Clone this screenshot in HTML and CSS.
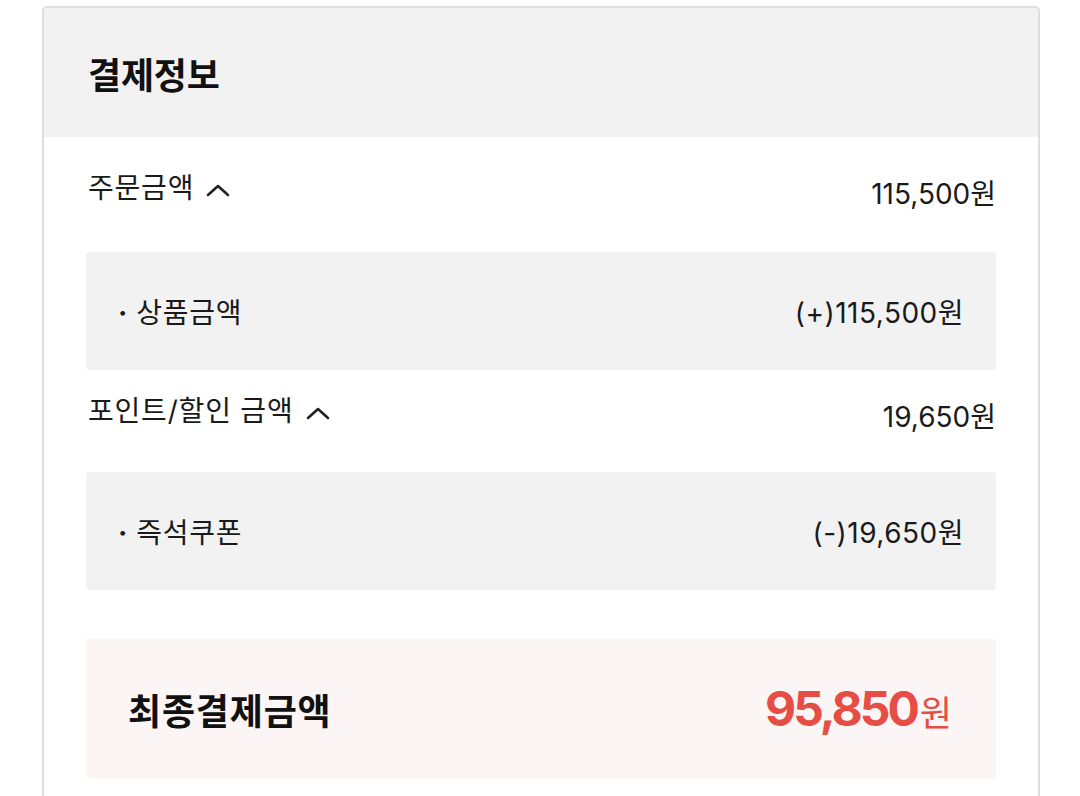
FILE: index.html
```html
<!DOCTYPE html>
<html lang="ko">
<head>
<meta charset="utf-8">
<title>결제정보</title>
<link rel="stylesheet" href="styles.css">
</head>
<body>
<div class="card">
  <div class="card-head">
    <h2 class="title">결제정보</h2>
  </div>
  <div class="card-body">
    <div class="group">
      <div class="row">
        <div class="label">주문금액
          <svg class="chev" width="24" height="14" viewBox="0 0 24 14"><path d="M2 12 L12 3 L22 12" fill="none" stroke="#222" stroke-width="2.6" stroke-linecap="round" stroke-linejoin="round"/></svg>
        </div>
        <div class="value">115,500원</div>
      </div>
      <div class="detail">
        <div class="detail-label"><span class="dot">·</span>상품금액</div>
        <div class="detail-value">(+)115,500원</div>
      </div>
    </div>
    <div class="group second">
      <div class="row">
        <div class="label">포인트/할인 금액
          <svg class="chev" width="24" height="14" viewBox="0 0 24 14"><path d="M2 12 L12 3 L22 12" fill="none" stroke="#222" stroke-width="2.6" stroke-linecap="round" stroke-linejoin="round"/></svg>
        </div>
        <div class="value">19,650원</div>
      </div>
      <div class="detail">
        <div class="detail-label"><span class="dot">·</span>즉석쿠폰</div>
        <div class="detail-value">(-)19,650원</div>
      </div>
    </div>
    <div class="total">
      <div class="total-label">최종결제금액</div>
      <div class="total-value"><span class="num">95,850</span><span class="won">원</span></div>
    </div>
  </div>
</div>
</body>
</html>
```

FILE: styles.css
```css
* { box-sizing: border-box; }
html, body { margin: 0; padding: 0; background: #fff; }
body {
  font-family: Inter, "Noto Sans CJK KR", sans-serif;
  color: #1a1a1a;
  padding-top: 6px;
}
.card {
  margin-left: 42px;
  width: 998px;
  border: 2px solid #dedede;
  border-radius: 5px 5px 0 0;
  min-height: 800px;
  overflow: hidden;
}
.card-head {
  height: 129px;
  background: #f2f2f2;
  display: flex;
  align-items: center;
  padding-left: 44px;
}
.title {
  margin: 0;
  font-size: 36px;
  font-weight: 700;
  letter-spacing: -0.2px;
  color: #111;
}
.card-body {
  padding: 33px 42px 0;
}
.row {
  display: flex;
  justify-content: space-between;
  align-items: flex-start;
  height: 36px;
  line-height: 36px;
  font-size: 28px;
  padding-left: 2px;
}
.label {
  display: flex;
  align-items: center;
  letter-spacing: 0.8px;
}
.chev { margin-left: 12px; margin-top: 4px; }
.value { padding-top: 6px; letter-spacing: 0; }
.detail {
  margin-top: 46px;
  height: 118px;
  background: #f2f2f2;
  border-radius: 4px;
  display: flex;
  justify-content: space-between;
  align-items: center;
  padding: 0 32px;
  font-size: 28px;
}
.detail-label { letter-spacing: 0.8px; }
.dot { margin-right: 8px; font-weight: 700; }
.detail-value { letter-spacing: 0.5px; }
.second { margin-top: 23px; }
.second .detail { margin-top: 43px; }
.total {
  margin-top: 49px;
  height: 139px;
  background: #fbf5f5;
  display: flex;
  justify-content: space-between;
  align-items: center;
  padding: 0 44px 0 42px;
}
.total-label {
  font-size: 36px;
  font-weight: 700;
  letter-spacing: 0.8px;
  color: #111;
}
.total-value { color: #e54d45; display: flex; align-items: baseline; }
.num { font-size: 48px; font-weight: 700; letter-spacing: -3px; }
.won { font-size: 35px; font-weight: 400; margin-left: 3px; }
```
